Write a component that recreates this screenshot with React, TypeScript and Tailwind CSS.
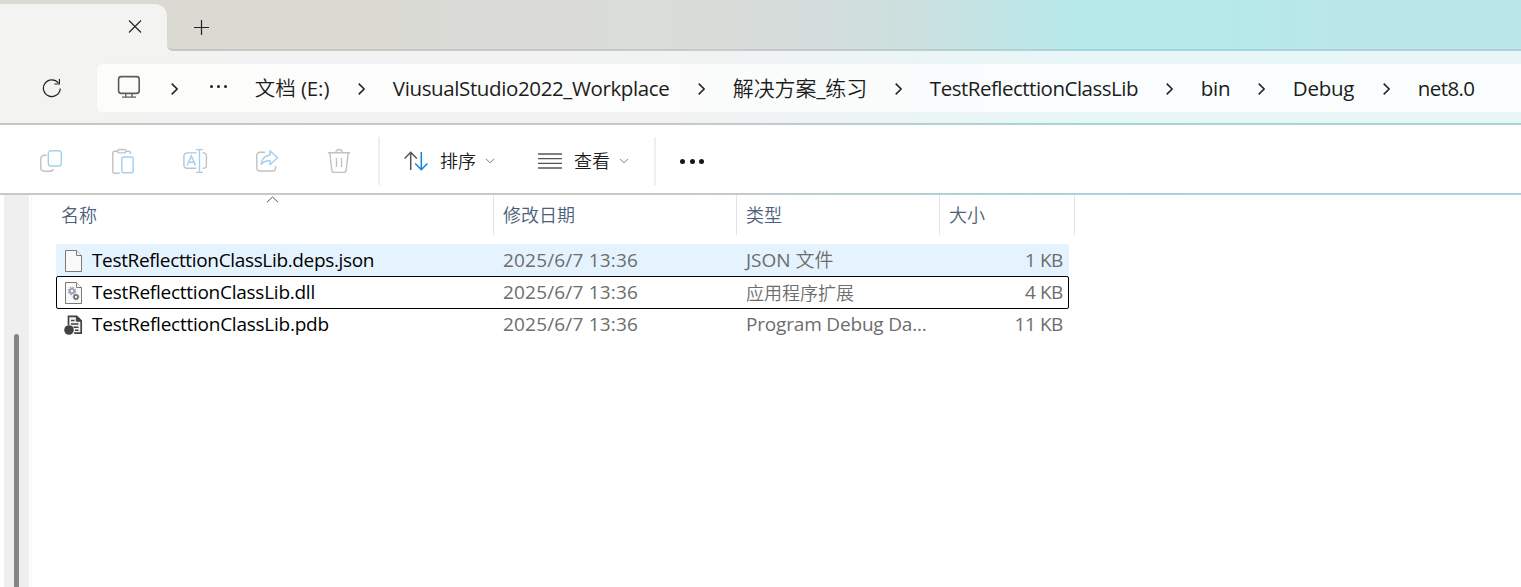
import React from "react";

const crumbs = [
  { label: "文档 (E:)", size: "w-[75px] text-[20.5px] -tracking-[0.1px]" },
  { label: "ViusualStudio2022_Workplace", size: "w-[277px] tracking-[-0.38px]" },
  { label: "解决方案_练习", size: "w-[134px] text-[21px] tracking-[-0.15px]" },
  { label: "TestReflecttionClassLib", size: "w-[208px] tracking-[-0.5px]" },
  { label: "bin", size: "w-[29px] tracking-[-0.3px]" },
  { label: "Debug", size: "w-[62px] tracking-[-0.25px]" },
  { label: "net8.0", size: "w-[57px] tracking-[-0.6px]" },
];

const files = [
  {
    name: "TestReflecttionClassLib.deps.json",
    nameStyle: "tracking-[-0.34px]",
    type: "JSON 文件",
    typeStyle: "text-[19px]",
    size: "1 KB",
    icon: <BlankFileIcon />,
    row: "bg-[#e5f3ff] border-[#e5f3ff]",
  },
  {
    name: "TestReflecttionClassLib.dll",
    nameStyle: "tracking-[-0.25px]",
    type: "应用程序扩展",
    typeStyle: "text-lg",
    size: "4 KB",
    icon: <DllFileIcon />,
    row: "border-black",
  },
  {
    name: "TestReflecttionClassLib.pdb",
    nameStyle: "tracking-[-0.24px]",
    type: "Program Debug Da...",
    typeStyle: "text-[19px] tracking-[-0.18px]",
    size: "11 KB",
    icon: <PdbFileIcon />,
    row: "border-transparent",
  },
];

function BlankFileIcon() {
  return (
    <svg width="20" height="24" viewBox="0 0 20 24" fill="#f9f9f9" stroke="#7a7a7a" strokeWidth="1">
      <path d="M1.5 1.5h11l5 5v16h-16z" />
      <path d="M12.5 1.5v5h5" />
    </svg>
  );
}

function DllFileIcon() {
  return (
    <svg width="20" height="24" viewBox="0 0 20 24" fill="#f9f9f9" stroke="#7a7a7a" strokeWidth="1">
      <path d="M1.5 1.5h11l5 5v16h-16z" />
      <path d="M12.5 1.5v5h5" />
      <circle cx="8" cy="10" r="3.4" fill="none" stroke="#9aa5b1" strokeWidth="1.6" strokeDasharray="1.6 1.07" />
      <circle cx="8" cy="10" r="2.2" fill="#f9f9f9" stroke="#9aa5b1" strokeWidth="1.8" />
      <circle cx="12" cy="16" r="2.8" fill="none" stroke="#66727c" strokeWidth="1" strokeDasharray="1.2 1" />
      <circle cx="12" cy="16" r="1.9" fill="#f9f9f9" stroke="#66727c" strokeWidth="1.5" />
    </svg>
  );
}

function PdbFileIcon() {
  return (
    <svg width="20" height="22" viewBox="0 0 20 22" fill="none" stroke="#424242" strokeWidth="1.7">
      <path d="M4.5 11V2.3h8.2l4.5 4.5v12.4h-7" fill="#f4f4f4" />
      <path d="M12.3 2v5.2h5z" fill="#424242" strokeWidth="1" />
      <path d="M7 6.5h3.5M7 10h7.5M9.5 13.2h5M11 16.2h3.5" strokeWidth="1.5" />
      <circle cx="5" cy="16" r="4.8" fill="#424242" stroke="none" />
    </svg>
  );
}

function CrumbChevron() {
  return (
    <svg className="shrink-0" width="7" height="12" viewBox="0 0 7 12" fill="none" stroke="#222" strokeWidth="1.5">
      <path d="M.7.6 6.1 6 .7 11.4" />
    </svg>
  );
}

function SmallChevron() {
  return (
    <svg width="10" height="6" viewBox="0 0 10 6" fill="none" stroke="#777" strokeWidth="1">
      <path d="M1 .8 5 4.8l4-4" />
    </svg>
  );
}

function TabStrip() {
  return (
    <div className="flex h-[51px] bg-[#dadad3] pt-1">
      <div className="h-[47px] w-[167px] rounded-tr-xl bg-[#f3f3f2]">
        <svg className="ml-[128px] mt-4" width="14" height="13" viewBox="0 0 14 13" stroke="#222" strokeWidth="1.1">
          <path d="M1 .5l12 12M13 .5l-12 12" />
        </svg>
      </div>
      <div className="-mt-1 h-[51px] flex-1 bg-[#f3f3f2]">
        {/* rounded foot where the strip meets the active tab */}
        <div className="flex h-[51px] rounded-bl-md border-b-2 border-black/8 bg-[linear-gradient(90deg,#dadad3_233px,#dadad7_300px,#dadcd8_456px,#d6dcda_613px,#cddfdd_724px,#c6e2e2_791px,#bde6e7_858px,#b5e9ea_920px,#b5e9ea_1030px,#bae6ea_1180px)] bg-origin-border">
          <svg className="ml-[27px] mt-5" width="15" height="15" viewBox="0 0 15 15" stroke="#222" strokeWidth="1.2">
            <path d="M7.5 0v15M0 7.5h15" />
          </svg>
        </div>
      </div>
    </div>
  );
}

function AddressBar() {
  return (
    <div className="flex h-[72px] items-center bg-[linear-gradient(90deg,#f3f3f2_0px,#f1f2f2_680px,#e7f6f7_1090px,#e9f6f8_1300px)] pt-0.5">
      <svg className="ml-[42px] shrink-0" width="20" height="20" viewBox="0 0 20 20" fill="none" stroke="#222" strokeWidth="1.2">
        <path d="M18.2 10.500A8.400 8.400 0 1 1 16.400 5" />
        <path d="M17.400 1v5h-5" />
      </svg>
      <div className="ml-[35px] flex h-12 flex-1 items-center rounded-l-md bg-[linear-gradient(90deg,#fcfcfb_0px,#fbfcfb_550px,#f9fdfd_950px)] pl-5 pt-px">
        <svg className="-mt-1 shrink-0" width="24" height="24" viewBox="0 0 24 24" fill="none" stroke="#5c5c5c" strokeWidth="1.6">
          <rect x="1.6" y="1.6" width="20.6" height="16.8" rx="2.6" />
          <path d="M8.8 18.5v3.6M15 18.5v3.6M5 22.2h14" strokeWidth="1.3" />
        </svg>
        <div className="ml-[30px]"><CrumbChevron /></div>
        <div className="mb-1 ml-8 flex gap-[3.6px]">
          <span className="size-[3.4px] rounded-full bg-[#222]" />
          <span className="size-[3.4px] rounded-full bg-[#222]" />
          <span className="size-[3.4px] rounded-full bg-[#222]" />
        </div>
        <div className="ml-[27.5px] flex items-center gap-7 text-[20.5px] text-[#1c1c1c]">
          {crumbs.map((crumb, i) => (
            <React.Fragment key={crumb.label}>
              {i > 0 && <CrumbChevron />}
              <span className={`shrink-0 whitespace-nowrap ${crumb.size}`}>{crumb.label}</span>
            </React.Fragment>
          ))}
        </div>
      </div>
    </div>
  );
}

function CommandBar() {
  return (
    <div className="flex h-[68px] items-center bg-white pt-1 text-lg text-[#1c1c1c]">
      <div className="ml-[39px] flex items-center gap-12">
        <svg width="24" height="24" viewBox="0 0 24 24" fill="none" stroke="#c2c2c2" strokeWidth="1.4">
          <path d="M7.5 6.2H5.2a3.4 3.4 0 0 0-3.4 3.4v9.2a3.4 3.4 0 0 0 3.4 3.4h5.6q3 0 3.4-2.2" />
          <rect x="9.3" y="1.8" width="13" height="15.2" rx="2.8" stroke="#a3cff0" />
        </svg>
        <svg width="24" height="26" viewBox="0 0 24 26" fill="none" stroke="#c2c2c2" strokeWidth="1.4">
          <path d="M6.5 3.2H3.8a2 2 0 0 0-2 2v18a2 2 0 0 0 2 2h5M15 3.2h2.5a2 2 0 0 1 2 2V6" />
          <rect x="6.5" y="1.5" width="8.5" height="3.4" rx="1.7" />
          <rect x="10.8" y="9" width="11.4" height="15.8" rx="2" stroke="#a3cff0" />
        </svg>
        <svg width="26" height="26" viewBox="0 0 26 26" className="-mr-0.5" fill="none" stroke="#c2c2c2" strokeWidth="1.4">
          <path d="M13.5 4.9H4.2A3.2 3.2 0 0 0 .9 8v9.2a3.2 3.2 0 0 0 3.3 3.1h9.3M19.5 4.9h.6A3.3 3.3 0 0 1 23.4 8.2v8.8a3.3 3.3 0 0 1-3.3 3.3h-.6" />
          <path d="M4.2 17.4 8.3 7.8l4.2 9.6M5.6 14.2h5.5M16.5 1.8v22.4M13 1.6h7M13 24.4h7" stroke="#a3cff0" />
        </svg>
        <svg width="24" height="24" viewBox="0 0 24 24" fill="none" stroke="#c2c2c2" strokeWidth="1.4" strokeLinejoin="round">
          <path d="M10 3.2H5a3.2 3.2 0 0 0-3.2 3.2v12.4A3.2 3.2 0 0 0 5 22h12.4a3.2 3.2 0 0 0 3.2-3.2V17" />
          <path d="M15 1.8l7.5 7-7.5 7v-4Q9.5 11.2 6 15.5q1-8.5 9-9.5z" stroke="#a3cff0" />
        </svg>
        <svg width="24" height="26" viewBox="0 0 24 26" fill="none" stroke="#c2c2c2" strokeWidth="1.4">
          <path d="M.8 4.7h22.4M8.8 4.7a3.2 3.2 0 0 1 6.4 0M2.8 4.7l2 17.5a2.5 2.5 0 0 0 2.5 2.2h9.4a2.5 2.5 0 0 0 2.5-2.2l2-17.5M9.5 10v9M14.5 10v9" />
        </svg>
      </div>
      <div className="ml-[27px] h-12 w-0.5 bg-[#efefef]" />
      <button className="ml-6 flex items-center">
        <svg width="24" height="20" viewBox="0 0 24 20" fill="none" stroke="#555" strokeWidth="1.5">
          <path d="M6.7 19V1.3M.6 7.5l6.1-6.2 6.1 6.2" />
          <path d="M17.3 1v17.7M11.2 12.5l6.1 6.2 6.1-6.2" stroke="#1683d8" />
        </svg>
        <span className="ml-3 w-[45px] text-left">排序</span>
        <SmallChevron />
      </button>
      <button className="ml-[43px] flex items-center">
        <svg width="24" height="16" viewBox="0 0 24 16" stroke="#555" strokeWidth="1.3">
          <path d="M0 1h24M0 5.6h24M0 10.4h24M0 15h24" />
        </svg>
        <span className="ml-3 w-[45px] text-left">查看</span>
        <SmallChevron />
      </button>
      <div className="ml-[25px] h-12 w-0.5 bg-[#efefef]" />
      <div className="ml-6 flex gap-[4.5px]">
        <span className="size-[5px] rounded-full bg-[#161616]" />
        <span className="size-[5px] rounded-full bg-[#161616]" />
        <span className="size-[5px] rounded-full bg-[#161616]" />
      </div>
    </div>
  );
}

function FileList() {
  return (
    <div className="w-[1043px]">
      <div className="flex h-10 text-lg leading-10 text-[#4c607a]">
        <div className="relative w-[462px] border-r border-[#e5e5e5] pl-[29px]">
          名称
          <svg className="absolute left-[234px] top-px" width="13" height="7" viewBox="0 0 13 7" fill="none" stroke="#555" strokeWidth="1">
            <path d="M1 6.2 6.5 1 12 6.2" />
          </svg>
        </div>
        <div className="w-[243px] border-r border-[#e5e5e5] pl-[9px]">修改日期</div>
        <div className="w-[203px] border-r border-[#e5e5e5] pl-[9px]">类型</div>
        <div className="w-[135px] border-r border-[#e5e5e5] pl-[9px]">大小</div>
      </div>
      <div className="ml-6 mt-[9px] w-[1013px] text-[19px] text-[#6d6d6d]">
        {files.map((file) => (
          <div key={file.name} className={`flex h-[33px] not-first:-mt-px items-center rounded-xs border ${file.row}`}>
            <div className="flex w-[35px] justify-center pr-0.5">{file.icon}</div>
            <span className={`w-[411px] text-black ${file.nameStyle}`}>{file.name}</span>
            <span className="w-[243px] tracking-[0.18px]">2025/6/7 13:36</span>
            <span className={`w-[210px] whitespace-nowrap ${file.typeStyle}`}>{file.type}</span>
            <span className="flex-1 pr-[5px] text-right tracking-[-0.4px]">{file.size}</span>
          </div>
        ))}
      </div>
    </div>
  );
}

export default function App() {
  return (
    <div className="h-[587px] w-[1521px] overflow-hidden bg-white font-['Open_Sans','Noto_Sans_CJK_SC_DemiLight','Noto_Sans_CJK_SC_Light','Noto_Sans_CJK_SC',sans-serif]">
      <TabStrip />
      <AddressBar />
      <div className="h-0.5 bg-[linear-gradient(90deg,#c8c9c3_0px,#c8c9c7_680px,#a5d6d9_1090px,#a9d5da_1300px)]" />
      <CommandBar />
      <div className="h-0.5 bg-[linear-gradient(90deg,#c8c9c3_0px,#c8c9c7_680px,#a5d6d9_1090px,#a9d5da_1300px)]" />
      <div className="flex h-[392px]">
        <div className="ml-1 w-[25px] bg-[#efefef] pl-2.5 pt-[139px]">
          <div className="h-full w-[5px] rounded-t-full bg-[#858585]" />
        </div>
        <div className="ml-0.5 w-px bg-[#f7f7f7]" />
        <FileList />
      </div>
    </div>
  );
}
